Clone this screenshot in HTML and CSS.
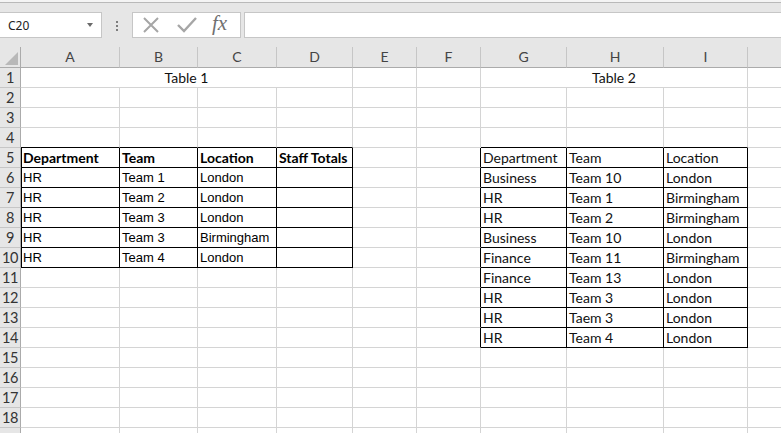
FILE: index.html
```html
<!DOCTYPE html>
<html>
<head>
<meta charset="utf-8">
<link rel="stylesheet" href="styles.css">
</head>
<body>
<div class="app">
  <div class="fbar">
    <div class="namebox"><span class="nb-text">C20</span><span class="caret"></span></div>
    <div class="dots"><i></i><i></i><i></i></div>
    <div class="fbtns">
      <svg class="ic-x" width="18" height="18" viewBox="0 0 18 18"><path d="M2 2 L16 16 M16 2 L2 16" stroke="#a6a6a6" stroke-width="2" fill="none"/></svg>
      <svg class="ic-ok" width="20" height="18" viewBox="0 0 20 18"><path d="M1 9 L7 15 L19 2" stroke="#a6a6a6" stroke-width="2.4" fill="none"/></svg>
      <span class="fx">fx</span>
    </div>
    <div class="finput"></div>
  </div>
  <div class="grid">
    <div class="corner"><svg width="20" height="20" viewBox="0 0 20 20"><path d="M17 4 L17 17 L4 17 Z" fill="#b8b8b8"/></svg></div>
    <div class="ch">A</div><div class="ch">B</div><div class="ch">C</div><div class="ch">D</div><div class="ch">E</div><div class="ch">F</div><div class="ch">G</div><div class="ch">H</div><div class="ch">I</div><div class="ch last"></div>

    <div class="rh">1</div><div class="c s4 title">Table 1</div><div class="c"></div><div class="c"></div><div class="c s3 title">Table 2</div><div class="c"></div>

    <div class="rh">2</div><div class="c"></div><div class="c"></div><div class="c"></div><div class="c"></div><div class="c"></div><div class="c"></div><div class="c"></div><div class="c"></div><div class="c"></div><div class="c"></div>
    <div class="rh">3</div><div class="c"></div><div class="c"></div><div class="c"></div><div class="c"></div><div class="c"></div><div class="c"></div><div class="c"></div><div class="c"></div><div class="c"></div><div class="c"></div>
    <div class="rh">4</div><div class="c bb"></div><div class="c bb"></div><div class="c bb"></div><div class="c bb"></div><div class="c"></div><div class="c"></div><div class="c bb"></div><div class="c bb"></div><div class="c bb"></div><div class="c"></div>

    <div class="rh">5</div><div class="c t1 bl hd">Department</div><div class="c t1 hd">Team</div><div class="c t1 hd">Location</div><div class="c t1 hd">Staff Totals</div><div class="c"></div><div class="c br"></div><div class="c t2">Department</div><div class="c t2">Team</div><div class="c t2">Location</div><div class="c"></div>
    <div class="rh">6</div><div class="c t1 bl">HR</div><div class="c t1">Team 1</div><div class="c t1">London</div><div class="c t1"></div><div class="c"></div><div class="c br"></div><div class="c t2">Business</div><div class="c t2">Team 10</div><div class="c t2">London</div><div class="c"></div>
    <div class="rh">7</div><div class="c t1 bl">HR</div><div class="c t1">Team 2</div><div class="c t1">London</div><div class="c t1"></div><div class="c"></div><div class="c br"></div><div class="c t2">HR</div><div class="c t2">Team 1</div><div class="c t2">Birmingham</div><div class="c"></div>
    <div class="rh">8</div><div class="c t1 bl">HR</div><div class="c t1">Team 3</div><div class="c t1">London</div><div class="c t1"></div><div class="c"></div><div class="c br"></div><div class="c t2">HR</div><div class="c t2">Team 2</div><div class="c t2">Birmingham</div><div class="c"></div>
    <div class="rh">9</div><div class="c t1 bl">HR</div><div class="c t1">Team 3</div><div class="c t1">Birmingham</div><div class="c t1"></div><div class="c"></div><div class="c br"></div><div class="c t2">Business</div><div class="c t2">Team 10</div><div class="c t2">London</div><div class="c"></div>
    <div class="rh">10</div><div class="c t1 bl">HR</div><div class="c t1">Team 4</div><div class="c t1">London</div><div class="c t1"></div><div class="c"></div><div class="c br"></div><div class="c t2">Finance</div><div class="c t2">Team 11</div><div class="c t2">Birmingham</div><div class="c"></div>
    <div class="rh">11</div><div class="c"></div><div class="c"></div><div class="c"></div><div class="c"></div><div class="c"></div><div class="c br"></div><div class="c t2">Finance</div><div class="c t2">Team 13</div><div class="c t2">London</div><div class="c"></div>
    <div class="rh">12</div><div class="c"></div><div class="c"></div><div class="c"></div><div class="c"></div><div class="c"></div><div class="c br"></div><div class="c t2">HR</div><div class="c t2">Team 3</div><div class="c t2">London</div><div class="c"></div>
    <div class="rh">13</div><div class="c"></div><div class="c"></div><div class="c"></div><div class="c"></div><div class="c"></div><div class="c br"></div><div class="c t2">HR</div><div class="c t2">Taem 3</div><div class="c t2">London</div><div class="c"></div>
    <div class="rh">14</div><div class="c"></div><div class="c"></div><div class="c"></div><div class="c"></div><div class="c"></div><div class="c br"></div><div class="c t2">HR</div><div class="c t2">Team 4</div><div class="c t2">London</div><div class="c"></div>
    <div class="rh">15</div><div class="c"></div><div class="c"></div><div class="c"></div><div class="c"></div><div class="c"></div><div class="c"></div><div class="c"></div><div class="c"></div><div class="c"></div><div class="c"></div>
    <div class="rh">16</div><div class="c"></div><div class="c"></div><div class="c"></div><div class="c"></div><div class="c"></div><div class="c"></div><div class="c"></div><div class="c"></div><div class="c"></div><div class="c"></div>
    <div class="rh">17</div><div class="c"></div><div class="c"></div><div class="c"></div><div class="c"></div><div class="c"></div><div class="c"></div><div class="c"></div><div class="c"></div><div class="c"></div><div class="c"></div>
    <div class="rh">18</div><div class="c"></div><div class="c"></div><div class="c"></div><div class="c"></div><div class="c"></div><div class="c"></div><div class="c"></div><div class="c"></div><div class="c"></div><div class="c"></div>
    <div class="rh"></div><div class="c"></div><div class="c"></div><div class="c"></div><div class="c"></div><div class="c"></div><div class="c"></div><div class="c"></div><div class="c"></div><div class="c"></div><div class="c"></div>
  </div>
</div>
</body>
</html>
```

FILE: styles.css
```css
* { box-sizing: border-box; }
html, body { margin: 0; padding: 0; background: #ffffff; }
.app { width: 781px; height: 433px; overflow: hidden; background: #e6e6e6; }

.fbar {
  height: 47px;
  display: flex;
  align-items: flex-start;
  padding-top: 12px;
  border-top: 1px solid #f4f4f4;
  box-shadow: inset 0 1px 0 #f4f4f4, inset 0 2px 0 #b9b9b9;
  background: #e6e6e6;
}
.namebox {
  width: 103px;
  height: 26px;
  margin-left: -1px;
  margin-top: -1px;
  background: #ffffff;
  border: 1px solid #c6c6c6;
  display: flex;
  align-items: center;
  justify-content: space-between;
  padding: 0 8px 0 8px;
  font-family: "Noto Sans", "Open Sans", sans-serif;
  font-size: 12px;
  color: #222;
}
.caret {
  width: 0; height: 0;
  border-left: 3.5px solid transparent;
  border-right: 3.5px solid transparent;
  border-top: 4px solid #6a6a6a;
}
.dots {
  width: 30px;
  height: 26px;
  display: flex;
  flex-direction: column;
  align-items: center;
  justify-content: center;
  gap: 2px;
}
.dots i { display: block; width: 2px; height: 2px; background: #7d7d7d; }
.fbtns {
  width: 109px;
  height: 26px;
  margin-top: -1px;
  background: #ffffff;
  border: 1px solid #c6c6c6;
  display: flex;
  align-items: center;
}
.ic-x { margin-left: 9px; }
.ic-ok { margin-left: 17px; margin-top: -1px; }
.fx {
  margin-left: 15px;
  font-family: "Liberation Serif", serif;
  font-style: italic;
  font-size: 21px;
  color: #707070;
  line-height: 1;
  margin-top: -3px;
}
.finput {
  flex: 1;
  height: 26px;
  margin-top: -1px;
  margin-left: 3px;
  margin-right: -2px;
  background: #ffffff;
  border: 1px solid #c6c6c6;
}

.grid {
  display: grid;
  grid-template-columns: 21px 99px 78px 79px 76px 64px 64px 86px 97px 84px 40px;
  grid-template-rows: 21px repeat(19, 20px);
  background: #ffffff;
}
.corner {
  background: #e6e6e6;
  border-right: 1px solid #ababab;
  border-bottom: 1px solid #ababab;
  display: flex;
  align-items: flex-end;
  justify-content: flex-end;
}
.corner svg { display: block; margin-right: -1px; margin-bottom: -1px; }
.ch {
  background: #e6e6e6;
  border-bottom: 1px solid #ababab;
  border-right: 1px solid #c6c6c6;
  font-family: Lato, "Open Sans", sans-serif;
  font-size: 14px;
  color: #444444;
  text-align: center;
  line-height: 20px;
}
.rh {
  background: #e6e6e6;
  border-right: 1px solid #ababab;
  border-bottom: 1px solid #c6c6c6;
  font-family: Lato, "Open Sans", sans-serif;
  font-size: 14.5px;
  color: #333333;
  text-align: center;
  line-height: 19px;
  letter-spacing: -0.3px;
}
.c {
  border-right: 1px solid #d4d4d4;
  border-bottom: 1px solid #d4d4d4;
  font-family: Lato, "Open Sans", sans-serif;
  font-size: 14px;
  color: #000000;
  line-height: 19px;
  padding: 0 0 0 2px;
  white-space: nowrap;
}
.s4 { grid-column: span 4; }
.s3 { grid-column: span 3; }
.title { text-align: center; padding-left: 0; color: #111; }
.bb { border-bottom-color: #000000; }
.br { border-right-color: #000000; }
.t1, .t2 { border-right-color: #000000; border-bottom-color: #000000; }
.t2 { color: #111; }
.t1 { font-family: "Liberation Sans", Arial, sans-serif; font-size: 13px; }
.t1.hd { font-family: Lato, "Open Sans", sans-serif; font-size: 14px; font-weight: bold; }
.bl { box-shadow: inset 1px 0 0 #000000; }
```
